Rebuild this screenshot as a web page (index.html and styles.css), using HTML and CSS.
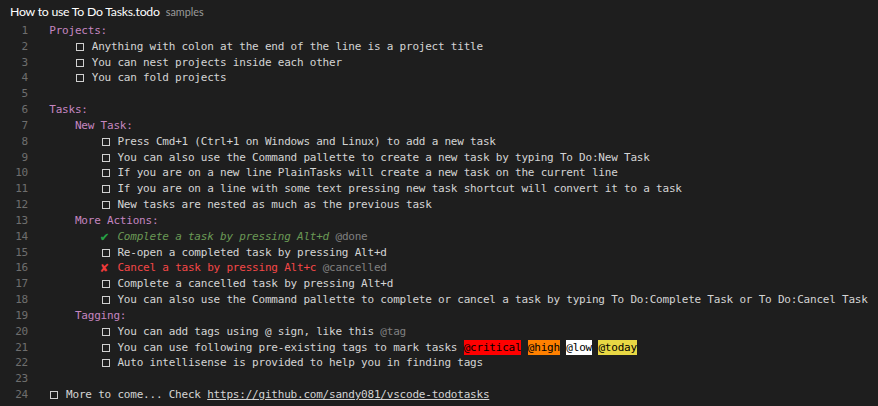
FILE: index.html
```html
<!DOCTYPE html>
<html>
<head>
<meta charset="utf-8">
<link rel="stylesheet" href="styles.css">
</head>
<body>
<div class="window">
  <div class="titlebar"><span class="title">How to use To Do Tasks.todo</span><span class="folder">samples</span></div>
  <div class="editor">
    <div class="line"><span class="num">1</span><span class="code"><span class="proj">Projects:</span></span></div>
    <div class="line"><span class="num">2</span><span class="code">    <span class="box"></span> Anything with colon at the end of the line is a project title</span></div>
    <div class="line"><span class="num">3</span><span class="code">    <span class="box"></span> You can nest projects inside each other</span></div>
    <div class="line"><span class="num">4</span><span class="code">    <span class="box"></span> You can fold projects</span></div>
    <div class="line"><span class="num">5</span><span class="code"></span></div>
    <div class="line"><span class="num">6</span><span class="code"><span class="proj">Tasks:</span></span></div>
    <div class="line"><span class="num">7</span><span class="code">    <span class="proj">New Task:</span></span></div>
    <div class="line"><span class="num">8</span><span class="code">        <span class="box"></span> Press Cmd+1 (Ctrl+1 on Windows and Linux) to add a new task</span></div>
    <div class="line"><span class="num">9</span><span class="code">        <span class="box"></span> You can also use the Command pallette to create a new task by typing To Do:New Task</span></div>
    <div class="line"><span class="num">10</span><span class="code">        <span class="box"></span> If you are on a new line PlainTasks will create a new task on the current line</span></div>
    <div class="line"><span class="num">11</span><span class="code">        <span class="box"></span> If you are on a line with some text pressing new task shortcut will convert it to a task</span></div>
    <div class="line"><span class="num">12</span><span class="code">        <span class="box"></span> New tasks are nested as much as the previous task</span></div>
    <div class="line"><span class="num">13</span><span class="code">    <span class="proj">More Actions:</span></span></div>
    <div class="line"><span class="num">14</span><span class="code">        <span class="mark check">✔</span> <span class="done">Complete a task by pressing Alt+d</span> <span class="meta">@done</span></span></div>
    <div class="line"><span class="num">15</span><span class="code">        <span class="box"></span> Re-open a completed task by pressing Alt+d</span></div>
    <div class="line"><span class="num">16</span><span class="code">        <span class="mark cross">✘</span> <span class="cancel">Cancel a task by pressing Alt+c</span> <span class="meta">@cancelled</span></span></div>
    <div class="line"><span class="num">17</span><span class="code">        <span class="box"></span> Complete a cancelled task by pressing Alt+d</span></div>
    <div class="line"><span class="num">18</span><span class="code">        <span class="box"></span> You can also use the Command pallette to complete or cancel a task by typing To Do:Complete Task or To Do:Cancel Task</span></div>
    <div class="line"><span class="num">19</span><span class="code">    <span class="proj">Tagging:</span></span></div>
    <div class="line"><span class="num">20</span><span class="code">        <span class="box"></span> You can add tags using @ sign, like this <span class="meta">@tag</span></span></div>
    <div class="line"><span class="num">21</span><span class="code">        <span class="box"></span> You can use following pre-existing tags to mark tasks <span class="tag critical">@critical</span> <span class="tag high">@high</span> <span class="tag low">@low</span> <span class="tag today">@today</span></span></div>
    <div class="line"><span class="num">22</span><span class="code">        <span class="box"></span> Auto intellisense is provided to help you in finding tags</span></div>
    <div class="line"><span class="num">23</span><span class="code"></span></div>
    <div class="line"><span class="num">24</span><span class="code"><span class="box"></span> More to come... Check <span class="link">https://github.com/sandy081/vscode-todotasks</span></span></div>
  </div>
</div>
</body>
</html>
```
FILE: styles.css
```css
html, body {
  margin: 0;
  padding: 0;
  background: #1e1e1e;
}
.window {
  width: 878px;
  height: 406px;
  background: #1e1e1e;
  overflow: hidden;
}
.titlebar {
  height: 23px;
  display: flex;
  align-items: center;
  padding-left: 10px;
  font-family: Lato, "Open Sans", sans-serif;
  white-space: nowrap;
}
.title {
  color: #ffffff;
  font-size: 12.3px;
  letter-spacing: -0.25px;
}
.folder {
  color: #9a9a9a;
  font-size: 10.8px;
  margin-left: 6px;
}
.editor {
  font-family: "DejaVu Sans Mono", "Liberation Mono", monospace;
  font-size: 11px;
  letter-spacing: -0.21px;
  color: #d4d4d4;
}
.line {
  display: flex;
  height: 15.83px;
  line-height: 15.83px;
  white-space: pre;
}
.num {
  width: 28px;
  text-align: right;
  color: #6e6e6e;
  flex: none;
}
.code {
  padding-left: 21.3px;
  flex: none;
}
.proj {
  color: #c586c0;
}
.box {
  display: inline-block;
  width: 10.4px;
  height: 15.83px;
  position: relative;
  vertical-align: top;
}
.box::before {
  content: "";
  position: absolute;
  left: 1px;
  top: 4px;
  width: 6px;
  height: 6px;
  border: 1px solid #d0d0d0;
}
.mark {
  display: inline-block;
  width: 10.4px;
  vertical-align: top;
  letter-spacing: 0;
}
.check {
  color: #25a244;
  font-size: 13.5px;
}
.cross {
  color: #f03a3a;
  font-size: 13px;
  font-weight: bold;
}
.done {
  color: #6a9955;
  font-style: italic;
}
.cancel {
  color: #f44747;
}
.meta {
  color: #808080;
}
.tag {
  display: inline-block;
  height: 15.83px;
  vertical-align: top;
  color: #000;
}
.critical { background: #ff0000; }
.high { background: #ff8000; }
.low { background: #ffffff; }
.today { background: #e8d844; }
.link {
  text-decoration: underline;
}
```
